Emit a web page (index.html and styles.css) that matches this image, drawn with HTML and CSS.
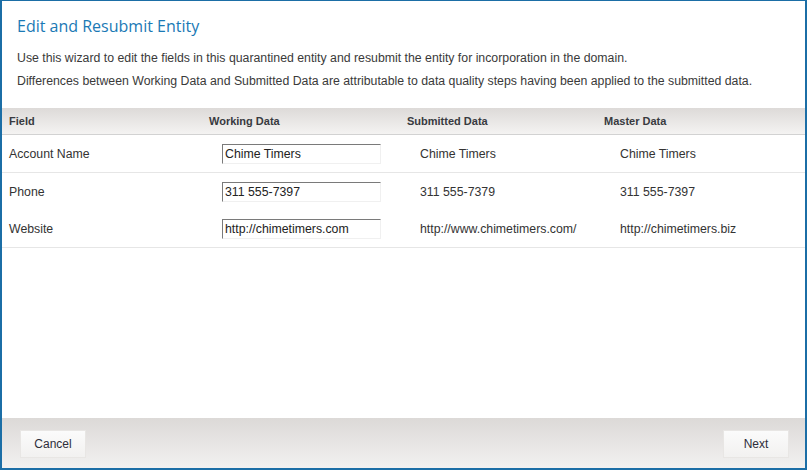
FILE: index.html
```html
<!DOCTYPE html>
<html>
<head>
<meta charset="utf-8">
<link rel="stylesheet" href="styles.css">
</head>
<body>
<div class="frame">
  <div class="intro">
    <h1 class="title">Edit and Resubmit Entity</h1>
    <p class="desc">Use this wizard to edit the fields in this quarantined entity and resubmit the entity for incorporation in the domain.</p>
    <p class="desc">Differences between Working Data and Submitted Data are attributable to data quality steps having been applied to the submitted data.</p>
  </div>
  <div class="grid">
    <div class="row head">
      <div class="hcell">Field</div>
      <div class="hcell">Working Data</div>
      <div class="hcell">Submitted Data</div>
      <div class="hcell">Master Data</div>
    </div>
    <div class="row lined">
      <div class="cell label">Account Name</div>
      <div class="cell val"><input class="field" type="text" value="Chime Timers"></div>
      <div class="cell val">Chime Timers</div>
      <div class="cell val">Chime Timers</div>
    </div>
    <div class="row">
      <div class="cell label">Phone</div>
      <div class="cell val"><input class="field" type="text" value="311 555-7397"></div>
      <div class="cell val">311 555-7379</div>
      <div class="cell val">311 555-7397</div>
    </div>
    <div class="row lined">
      <div class="cell label">Website</div>
      <div class="cell val"><input class="field" type="text" value="http://chimetimers.com"></div>
      <div class="cell val">http://www.chimetimers.com/</div>
      <div class="cell val">http://chimetimers.biz</div>
    </div>
  </div>
  <div class="spacer"></div>
  <div class="footer">
    <button class="btn">Cancel</button>
    <button class="btn">Next</button>
  </div>
</div>
</body>
</html>
```
FILE: styles.css
```css
html, body {
  margin: 0;
  padding: 0;
  background: #fff;
}
.frame {
  width: 807px;
  height: 470px;
  box-sizing: border-box;
  border-style: solid;
  border-color: #1b6ea6;
  border-width: 1px 2px 2px 2px;
  display: flex;
  flex-direction: column;
  font-family: "Liberation Sans", Arial, sans-serif;
  color: #333;
}
.intro {
  padding: 14px 15px 0 15px;
  height: 107px;
  box-sizing: border-box;
}
.title {
  margin: 0 0 14px 0;
  font-family: "Open Sans", "Liberation Sans", sans-serif;
  font-weight: normal;
  font-size: 16px;
  line-height: 22px;
  color: #1a79b5;
}
.desc {
  margin: 0 0 8px 0;
  font-size: 12.3px;
  line-height: 15px;
  color: #3a3a3a;
}
.grid {
  display: flex;
  flex-direction: column;
}
.row {
  display: grid;
  grid-template-columns: 200px 198px 196px 1fr;
  height: 37px;
  align-items: center;
  box-sizing: border-box;
}
.row.lined {
  height: 38px;
  border-bottom: 1px solid #e6e6e6;
}
.row.head {
  height: 27px;
  background: linear-gradient(#dddad8, #f4f3f2);
  border-bottom: 1px solid #d2d2d2;
}
.hcell {
  padding-left: 7px;
  font-size: 11px;
  font-weight: bold;
  color: #383a40;
}
.hcell:nth-child(4) {
  padding-left: 8px;
}
.cell {
  font-size: 12.3px;
  color: #333;
}
.label {
  padding-left: 7px;
}
.val {
  padding-left: 20px;
}
.val:nth-child(4) {
  padding-left: 24px;
}
.field {
  box-sizing: border-box;
  width: 159px;
  height: 20px;
  margin: 0;
  padding: 0 2px;
  font-family: "Liberation Sans", Arial, sans-serif;
  font-size: 12.3px;
  color: #222;
  background: #fff;
  border-style: solid;
  border-width: 1px;
  border-color: #7a7a7a #f0f0f0 #f0f0f0 #7a7a7a;
  outline: none;
}
.spacer {
  flex: 1;
}
.footer {
  height: 50px;
  background: linear-gradient(#dcd9d7, #f2f1f0);
  display: flex;
  justify-content: space-between;
  align-items: center;
  padding: 0 16px 0 18px;
}
.btn {
  width: 66px;
  height: 28px;
  margin-top: 1px;
  font-family: "Liberation Sans", Arial, sans-serif;
  font-size: 12px;
  color: #2d2d3a;
  background: linear-gradient(#fbfbfb, #f2f1f0);
  border: 1px solid #e8e6e4;
  border-radius: 0;
  padding: 0;
}
```
